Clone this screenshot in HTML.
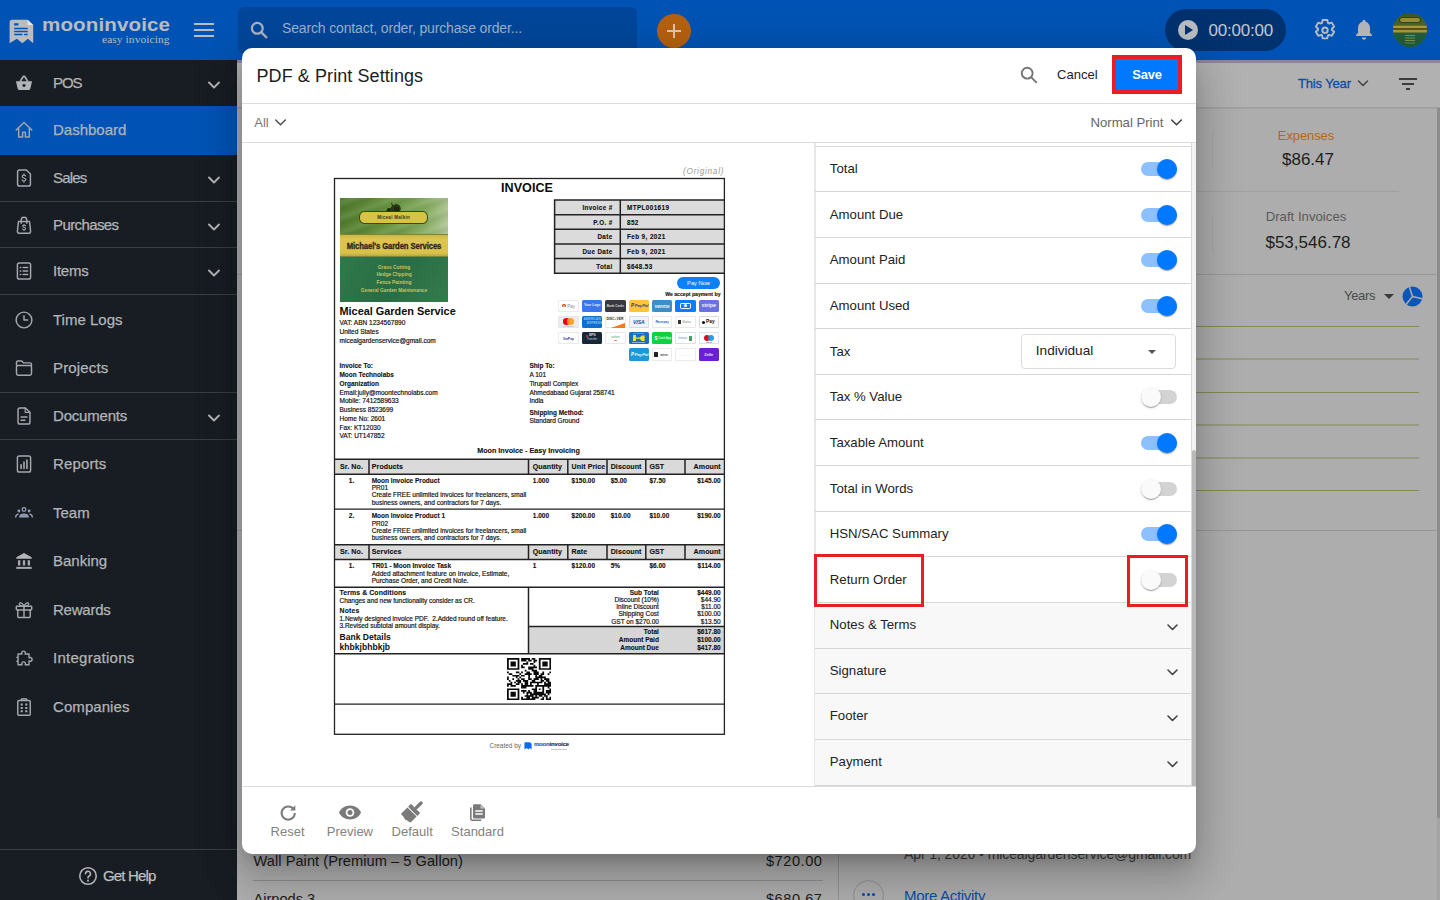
<!DOCTYPE html>
<html>
<head>
<meta charset="utf-8">
<title>PDF &amp; Print Settings</title>
<style>
*{box-sizing:border-box;margin:0;padding:0}
html,body{width:1440px;height:900px;overflow:hidden}
body{font-family:"Liberation Sans",sans-serif;background:#adadad;position:relative;color:#222}
.abs{position:absolute}
/* ---------- header ---------- */
#hdr{position:absolute;left:0;top:0;width:1440px;height:60px;background:#0053b4}
#hdr .search{position:absolute;left:238px;top:7px;width:399px;height:46px;border-radius:6px;background:#00469a}
#hdr .search span{position:absolute;left:44px;top:13px;font-size:14px;color:#9fb0c8;white-space:nowrap;letter-spacing:-.15px}
#plus{position:absolute;left:657px;top:14px;width:34px;height:34px;border-radius:50%;background:#b5610f}
#plus:before{content:"";position:absolute;left:10px;top:16px;width:14px;height:2px;background:#d8c8b4}
#plus:after{content:"";position:absolute;left:16px;top:10px;width:2px;height:14px;background:#d8c8b4}
#timer{position:absolute;left:1165px;top:9px;width:121px;height:42px;border-radius:21px;background:#00326f}
#timer .play{position:absolute;left:13px;top:11px;width:20px;height:20px;border-radius:50%;background:#b9bcc0}
#timer .play:after{content:"";position:absolute;left:7px;top:5px;border-left:8px solid #00326f;border-top:5px solid transparent;border-bottom:5px solid transparent}
#timer span{position:absolute;left:43.500px;top:11.700px;font-size:17px;color:#c3c8cf;letter-spacing:-.2px}
#avatar{position:absolute;left:1393px;top:13px;width:34px;height:34px;border-radius:50%;overflow:hidden;background:#4c6a2c}
#hstrip{position:absolute;left:237px;top:60px;width:1203px;height:3px;background:#8d84a0}
/* ---------- sidebar ---------- */
#side{position:absolute;left:0;top:60px;width:237px;height:840px;background:#181d23}
#side .it{position:absolute;left:0;width:237px;color:#b2b4b7;font-size:15px}
#side .it .lb{position:absolute;left:53px;white-space:nowrap;-webkit-text-stroke:.25px #b2b4b7}
#side .it svg.ic{position:absolute;left:13px}
#side .it svg.ch{position:absolute;left:207px}
#side .ln{position:absolute;left:0;width:237px;height:1px;background:#3a3f45}
#side .act{background:#0053b4}
/* ---------- page bg ---------- */
#sub{position:absolute;left:237px;top:63px;width:1203px;height:45px;background:#b1b1b1}
</style>
</head>
<body>
<!--PAGE-->
<div id="sub"></div>
<div id="hstrip"></div>
<div class="abs" style="left:237px;top:107px;width:1203px;height:2px;background:linear-gradient(#9c9c9c,#a6a6a6)"></div>
<div class="abs" style="left:1437px;top:108px;width:3px;height:792px;background:#a4a4a4"></div><div class="abs" style="left:1437px;top:108px;width:3px;height:710px;background:#8c8c8c"></div>
<div class="abs" style="left:1298px;top:76px;font-size:13px;color:#0a4da6;white-space:nowrap;letter-spacing:-.15px;-webkit-text-stroke:.3px #0a4da6">This Year</div>
<svg class="abs" style="left:1357px;top:79px" width="12" height="9" viewBox="0 0 12 9" fill="none" stroke="#444" stroke-width="1.500" stroke-linecap="round" stroke-linejoin="round"><path d="M1.500 2l4.500 4.500L10.500 2"/></svg>
<div class="abs" style="left:1399px;top:78px;width:18px;height:2px;background:#3c3c3c"></div>
<div class="abs" style="left:1402px;top:83px;width:12px;height:2px;background:#3c3c3c"></div>
<div class="abs" style="left:1406px;top:88px;width:4px;height:2px;background:#3c3c3c"></div>
<!-- stats -->
<div class="abs" style="left:1212px;top:132px;width:1px;height:35px;background:#a2a2a2"></div>
<div class="abs" style="left:1212px;top:215px;width:1px;height:36px;background:#a2a2a2"></div>
<div class="abs" style="left:1196px;top:191px;width:203px;height:1px;background:#a0a0a0"></div>
<div class="abs" style="left:1206px;top:128px;width:200px;text-align:center;font-size:13px;color:#b5671c;letter-spacing:-.1px">Expenses</div>
<div class="abs" style="left:1208px;top:149.800px;width:200px;text-align:center;font-size:17px;color:#1e1e1e">$86.47</div>
<div class="abs" style="left:1206px;top:209px;width:200px;text-align:center;font-size:13.200px;color:#5a5a5a">Draft Invoices</div>
<div class="abs" style="left:1208px;top:232.500px;width:200px;text-align:center;font-size:17px;color:#1e1e1e">$53,546.78</div>
<div class="abs" style="left:237px;top:274px;width:1200px;height:1px;background:#989898"></div>
<div class="abs" style="left:1344px;top:288px;font-size:13px;color:#4a4a4a;letter-spacing:-.3px">Years</div>
<div class="abs" style="left:1384px;top:294px;border-top:5px solid #3a3a3a;border-left:5px solid transparent;border-right:5px solid transparent"></div>
<svg class="abs" style="left:1402px;top:286px" width="21" height="21" viewBox="0 0 21 21"><circle cx="10.500" cy="10.500" r="10" fill="#0a55b8"/><path d="M10.500 10.500L7.400 1M10.500 10.500l9.600 2.300M10.500 10.500L4.200 18.200" stroke="#adadad" stroke-width="1.500" fill="none"/></svg>
<div class="abs" style="left:1196px;top:326px;width:223px;height:1px;background:#7f8c52;box-shadow:0 32.500px 0 #7f8c52,0 66px 0 #7f8c52,0 98.500px 0 #7f8c52,0 131.500px 0 #7f8c52,0 164px 0 #7f8c52"></div>
<div class="abs" style="left:237px;top:530px;width:1200px;height:1px;background:#969696"></div>
<!-- bottom lists -->
<div class="abs" style="left:253.500px;top:852.500px;font-size:14.600px;color:#1c1c1c;white-space:nowrap;letter-spacing:.05px">Wall Paint (Premium – 5 Gallon)</div>
<div class="abs" style="left:700px;top:852.500px;width:122.500px;text-align:right;font-size:14.600px;letter-spacing:.55px;color:#1c1c1c">$720.00</div>
<div class="abs" style="left:253px;top:880px;width:570px;height:1px;background:#8d8d8d"></div>
<div class="abs" style="left:253.500px;top:891px;font-size:14.600px;color:#1c1c1c;white-space:nowrap">Airpods 3</div>
<div class="abs" style="left:700px;top:891px;width:122.500px;text-align:right;font-size:14.600px;letter-spacing:.55px;color:#1c1c1c">$680.67</div>
<div class="abs" style="left:837.500px;top:780px;width:1px;height:120px;background:#949494"></div>
<div class="abs" style="left:904px;top:846px;font-size:14px;color:#3c3c3c;white-space:nowrap;letter-spacing:-.1px">Apr 1, 2026 • micealgardenservice@gmail.com</div>
<div class="abs" style="left:853px;top:880px;width:31px;height:31px;border-radius:50%;border:1px solid #8f8f8f"></div>
<div class="abs" style="left:862px;top:893px;width:3px;height:3px;border-radius:50%;background:#0a4da6;box-shadow:5px 0 0 #0a4da6,10px 0 0 #0a4da6"></div>
<div class="abs" style="left:904px;top:887px;font-size:15px;color:#0a4da6;white-space:nowrap;letter-spacing:-.3px">More Activity</div>

<div id="hdr">
  <svg class="abs" style="left:9px;top:19px" width="26" height="25" viewBox="0 0 26 25">
<path d="M3.2 0.700H18.600L24.200 6v18.300l-5.300-4.600-5.600 4.600-5.400-4.600L0.600 24.300V3.300A2.600 2.600 0 0 1 3.200 0.700z" fill="#b9bcc0"/>
<path d="M18.600 0.700V6h5.600z" fill="#e4e6e8"/>
<path d="M5.200 4.200h4.200v2.400H5.200zM5.200 8.800h13.500v1.500H5.200zM5.200 11.800h13.500v1.500H5.200zM5.200 14.800h8.300v1.500H5.200zM15.200 14.800h3.500v1.500h-3.500z" fill="#0053b4"/>
</svg>
<div class="abs" style="left:41.500px;top:14px;font-size:18.500px;font-weight:700;color:#b9bcc0;letter-spacing:.1px;white-space:nowrap;transform-origin:0 50%;transform:scaleX(1.112)">mooninvoice</div>
<div class="abs" style="left:102px;top:33px;font-family:'Liberation Serif',serif;font-size:11.400px;color:#b9bcc0;letter-spacing:.1px;white-space:nowrap">easy invoicing</div>
<div class="abs" style="left:194px;top:23px;width:20px;height:2px;background:#b9bcc0;box-shadow:0 6px 0 #b9bcc0,0 12px 0 #b9bcc0"></div>
  <div class="search"><svg class="abs" style="left:11px;top:13px" width="20" height="20" viewBox="0 0 20 20" fill="none" stroke="#aab3c0" stroke-width="2.200" stroke-linecap="round"><circle cx="8.300" cy="8.300" r="5.400"/><path d="M12.400 12.400l5 5"/></svg><span>Search contact, order, purchase order...</span></div>
  <div id="plus"></div>
  <div id="timer"><div class="play"></div><span>00:00:00</span></div>
  <svg class="abs" style="left:1313px;top:17.500px" width="24" height="24" viewBox="0 0 24 24" fill="none" stroke="#b9bcc0" stroke-width="1.900" stroke-linejoin="round"><path d="M9.700 2h4.600l.7 3 .9.500 2.900-.9 2.300 4-2.200 2.100v1l2.200 2.100-2.300 4-2.900-.9-.9.500-.7 3H9.700l-.7-3-.9-.5-2.900.9-2.300-4 2.200-2.100v-1L2.900 8.600l2.300-4 2.900.9.900-.5z"/><circle cx="12" cy="12.200" r="2.700"/></svg>
<svg class="abs" style="left:1353px;top:18.200px" width="22" height="24" viewBox="0 0 22 24"><path d="M11 1.800a1.500 1.500 0 0 1 1.500 1.500v.5c2.800.7 4.500 3.100 4.500 6.200v4.800l2 2.200v1H3v-1l2-2.200V10c0-3.100 1.700-5.500 4.500-6.200v-.5A1.500 1.500 0 0 1 11 1.800zM8.800 19.600h4.400a2.200 2.200 0 0 1-4.400 0z" fill="#b3b4b6"/></svg>
  <div id="avatar"><div class="abs" style="left:0;top:0;width:34px;height:34px;background:linear-gradient(#38561f 0,#45652b 34%,#5a5a24 36%,#a89838 38.500%,#ac9c3a 44%,#5a4e1c 45.500%,#3a3012 47%,#5a4e1c 48.500%,#a89838 50%,#a4943a 56%,#3a5a30 58.500%,#1f5c3a 62%,#1d5636 100%)"></div><div class="abs" style="left:7px;top:5px;width:20px;height:3.500px;border-radius:2px;background:#9a8c34;box-shadow:0 0 0 .8px #2a3a18"></div><div class="abs" style="left:12px;top:22px;width:10px;height:1px;background:#7a8c4c;box-shadow:0 2.500px 0 #7a8c4c,0 5px 0 #7a8c4c,0 7.500px 0 #6a7c44"></div></div>
</div>
<div id="side">
<div class="it act" style="top:46px;height:48.5px"></div>
<div class="it" style="top:11px;height:24px"><svg class="ic" width="22" height="22" viewBox="0 0 24 24" fill="none" stroke="#a4a7ab" stroke-width="1.6" stroke-linecap="round" stroke-linejoin="round" style="top:1px"><path d="M3.2 10h17.6l-1.9 8.3a1.6 1.6 0 0 1-1.6 1.2H6.7a1.6 1.6 0 0 1-1.6-1.2z" fill="#b2b4b7" stroke="none"/><path d="M8 10l3.2-5.2M16 10l-3.2-5.2" stroke-width="2"/><circle cx="12" cy="14.8" r="1.6" fill="#181d23" stroke="none"/></svg><span class="lb" style="top:3px;letter-spacing:-1.06px">POS</span><svg class="ch" style="top:9px" width="14" height="10" viewBox="0 0 14 10" fill="none" stroke="#b2b4b7" stroke-width="1.900" stroke-linecap="round" stroke-linejoin="round"><path d="M2 2.500l5 5 5-5"/></svg></div>
<div class="it" style="top:58px;height:24px"><svg class="ic" width="22" height="22" viewBox="0 0 24 24" fill="none" stroke="#a4a7ab" stroke-width="1.6" stroke-linecap="round" stroke-linejoin="round" style="top:1px"><path d="M3.5 12L12 3.8l8.500 8.2M6.200 10v9.700h4.300v-5.400h3v5.400h4.300V10"/></svg><span class="lb" style="top:3px;letter-spacing:0px">Dashboard</span></div>
<div class="it" style="top:106px;height:24px"><svg class="ic" width="22" height="22" viewBox="0 0 24 24" fill="none" stroke="#a4a7ab" stroke-width="1.6" stroke-linecap="round" stroke-linejoin="round" style="top:1px"><path d="M5 5.200a2 2 0 0 1 2-2h7.500L19 7.700v11.100a2 2 0 0 1-2 2H7a2 2 0 0 1-2-2z"/><path d="M13.800 9.800c-.4-.7-1.100-1-1.900-1-1.100 0-1.900.6-1.900 1.600 0 2.200 3.900 1 3.900 3.300 0 1-.9 1.600-2 1.600-.9 0-1.700-.4-2.100-1.200M12 7.600v1.200M12 15.300v1.200" stroke-width="1.300"/></svg><span class="lb" style="top:3px;letter-spacing:-0.8px">Sales</span><svg class="ch" style="top:9px" width="14" height="10" viewBox="0 0 14 10" fill="none" stroke="#b2b4b7" stroke-width="1.900" stroke-linecap="round" stroke-linejoin="round"><path d="M2 2.500l5 5 5-5"/></svg></div>
<div class="it" style="top:152.5px;height:24px"><svg class="ic" width="22" height="22" viewBox="0 0 24 24" fill="none" stroke="#a4a7ab" stroke-width="1.6" stroke-linecap="round" stroke-linejoin="round" style="top:1px"><path d="M6 8.200h12l1.200 10.600a2 2 0 0 1-2 2.200H6.800a2 2 0 0 1-2-2.200z"/><path d="M9 10V6.500a3 3 0 0 1 6 0V10"/><path d="M13.600 12.900c-.3-.5-.9-.8-1.500-.8-.9 0-1.500.5-1.500 1.200 0 1.700 3.100.8 3.100 2.600 0 .8-.7 1.300-1.600 1.300-.7 0-1.300-.3-1.700-.9M12 11.200v.9M12 17.200v.9" stroke-width="1.200"/></svg><span class="lb" style="top:3px;letter-spacing:-0.6px">Purchases</span><svg class="ch" style="top:9px" width="14" height="10" viewBox="0 0 14 10" fill="none" stroke="#b2b4b7" stroke-width="1.900" stroke-linecap="round" stroke-linejoin="round"><path d="M2 2.500l5 5 5-5"/></svg></div>
<div class="it" style="top:199px;height:24px"><svg class="ic" width="22" height="22" viewBox="0 0 24 24" fill="none" stroke="#a4a7ab" stroke-width="1.6" stroke-linecap="round" stroke-linejoin="round" style="top:1px"><rect x="4.800" y="3.200" width="14.400" height="17.600" rx="2"/><path d="M11 8.200h5M11 12h5M11 15.800h5" stroke-width="1.500"/><path d="M8 8.200h.4M8 12h.4M8 15.800h.4" stroke-width="1.800"/></svg><span class="lb" style="top:3px;letter-spacing:-0.24px">Items</span><svg class="ch" style="top:9px" width="14" height="10" viewBox="0 0 14 10" fill="none" stroke="#b2b4b7" stroke-width="1.900" stroke-linecap="round" stroke-linejoin="round"><path d="M2 2.500l5 5 5-5"/></svg></div>
<div class="it" style="top:248px;height:24px"><svg class="ic" width="22" height="22" viewBox="0 0 24 24" fill="none" stroke="#a4a7ab" stroke-width="1.6" stroke-linecap="round" stroke-linejoin="round" style="top:1px"><circle cx="12" cy="12" r="8.600"/><path d="M12 7.300V12h4"/></svg><span class="lb" style="top:3px;letter-spacing:0px">Time Logs</span></div>
<div class="it" style="top:296px;height:24px"><svg class="ic" width="22" height="22" viewBox="0 0 24 24" fill="none" stroke="#a4a7ab" stroke-width="1.6" stroke-linecap="round" stroke-linejoin="round" style="top:1px"><path d="M3.800 9.300V6a1.600 1.600 0 0 1 1.600-1.600h4.200l1.800 2h7.200A1.600 1.600 0 0 1 20.200 8v1.300"/><rect x="3.800" y="9.300" width="16.400" height="10.500" rx="1.800"/></svg><span class="lb" style="top:3px;letter-spacing:0.16px">Projects</span></div>
<div class="it" style="top:344px;height:24px"><svg class="ic" width="22" height="22" viewBox="0 0 24 24" fill="none" stroke="#a4a7ab" stroke-width="1.6" stroke-linecap="round" stroke-linejoin="round" style="top:1px"><path d="M5.500 5.200a2 2 0 0 1 2-2h6L18.500 8v10.800a2 2 0 0 1-2 2h-9a2 2 0 0 1-2-2z"/><path d="M13.300 3.400V8h4.900" stroke-width="1.300"/><path d="M8.800 13h6.400M8.800 16.600h4.200" stroke-width="1.700"/></svg><span class="lb" style="top:3px;letter-spacing:-0.2px">Documents</span><svg class="ch" style="top:9px" width="14" height="10" viewBox="0 0 14 10" fill="none" stroke="#b2b4b7" stroke-width="1.900" stroke-linecap="round" stroke-linejoin="round"><path d="M2 2.500l5 5 5-5"/></svg></div>
<div class="it" style="top:392px;height:24px"><svg class="ic" width="22" height="22" viewBox="0 0 24 24" fill="none" stroke="#a4a7ab" stroke-width="1.6" stroke-linecap="round" stroke-linejoin="round" style="top:1px"><rect x="4.800" y="3.200" width="14.400" height="17.600" rx="2"/><path d="M8.800 16.800v-4M12 16.800V9.800M15.200 16.800V7.600" stroke-width="1.800"/></svg><span class="lb" style="top:3px;letter-spacing:0.14px">Reports</span></div>
<div class="it" style="top:440.5px;height:24px"><svg class="ic" width="22" height="22" viewBox="0 0 24 24" fill="none" stroke="#a4a7ab" stroke-width="1.6" stroke-linecap="round" stroke-linejoin="round" style="top:1px"><g stroke="#93a2b8"><circle cx="12" cy="8.200" r="2" stroke-width="1.400"/><path d="M7.200 16.300c.3-2 2.300-3.300 4.800-3.300s4.500 1.300 4.800 3.300z" fill="#8696ad" stroke-width="1.100"/><circle cx="6.400" cy="9.800" r=".9" stroke-width="1.300"/><circle cx="17.600" cy="9.800" r=".9" stroke-width="1.300"/><path d="M3 16.300c.1-1.600 1-2.700 2.600-3M21 16.300c-.1-1.600-1-2.700-2.600-3" stroke-width="1.500"/></g></svg><span class="lb" style="top:3px;letter-spacing:0px">Team</span></div>
<div class="it" style="top:489px;height:24px"><svg class="ic" width="22" height="22" viewBox="0 0 24 24" fill="none" stroke="#a4a7ab" stroke-width="1.6" stroke-linecap="round" stroke-linejoin="round" style="top:1px"><path d="M12 3.200L3.600 7.800v1.700h16.800V7.800z" fill="#b2b4b7" stroke="none"/><path d="M6.700 11.200v5.600M12 11.200v5.600M17.300 11.200v5.600" stroke-width="2.600" stroke-linecap="butt"/><path d="M3.600 19.500h16.800" stroke-width="2.200" stroke-linecap="butt"/></svg><span class="lb" style="top:3px;letter-spacing:0px">Banking</span></div>
<div class="it" style="top:537.5px;height:24px"><svg class="ic" width="22" height="22" viewBox="0 0 24 24" fill="none" stroke="#a4a7ab" stroke-width="1.6" stroke-linecap="round" stroke-linejoin="round" style="top:1px"><rect x="3.600" y="8" width="16.800" height="4" rx=".8"/><path d="M5.200 12v7.200a1 1 0 0 0 1 1h11.600a1 1 0 0 0 1-1V12M12 8v12.200"/><path d="M12 8c-1.200-3-3-4.300-4.400-3.700-1.500.7-1 3.700 4.400 3.700zM12 8c1.200-3 3-4.300 4.400-3.700 1.500.7 1 3.700-4.400 3.700z" stroke-width="1.400"/></svg><span class="lb" style="top:3px;letter-spacing:-0.24px">Rewards</span></div>
<div class="it" style="top:586px;height:24px"><svg class="ic" width="22" height="22" viewBox="0 0 24 24" fill="none" stroke="#a4a7ab" stroke-width="1.6" stroke-linecap="round" stroke-linejoin="round" style="top:1px"><path d="M9.500 6.500a2 2 0 1 1 4 0c0 .5-.1.800-.3 1.200h4.300v4.200c.4-.2.800-.4 1.300-.4a2 2 0 1 1 0 4c-.5 0-.9-.1-1.300-.4v4.300h-4.200c.2-.4.300-.8.300-1.200a2 2 0 1 0-4 0c0 .4.100.8.300 1.200H5.500v-4.100c-.4.200-.8.300-1.200.300a0 0 0 0 1 0 0c.9-.6 1.400-1.300 1.400-2.200s-.5-1.700-1.400-2.100c.4 0 .8.100 1.200.3V7.700h4.300c-.2-.4-.3-.8-.3-1.200z" stroke-width="1.500"/></svg><span class="lb" style="top:3px;letter-spacing:0.26px">Integrations</span></div>
<div class="it" style="top:634.5px;height:24px"><svg class="ic" width="22" height="22" viewBox="0 0 24 24" fill="none" stroke="#a4a7ab" stroke-width="1.6" stroke-linecap="round" stroke-linejoin="round" style="top:1px"><path d="M9.200 5V3.300h5.600V5"/><rect x="5.200" y="5" width="13.600" height="16" rx="1.200"/><path d="M9.400 9.300h.2M14.400 9.300h.2M9.400 13h.2M14.400 13h.2M9.400 16.700h.2M14.400 16.700h.2" stroke-width="2.200" stroke-linecap="square"/></svg><span class="lb" style="top:3px;letter-spacing:0.07px">Companies</span></div>
<div class="ln" style="top:140.5px"></div>
<div class="ln" style="top:187.0px"></div>
<div class="ln" style="top:234.0px"></div>
<div class="ln" style="top:332.0px"></div>
<div class="ln" style="top:378.5px"></div>
<div class="ln" style="top:788.5px"></div>
<div class="it" style="top:804px;height:24px"><svg class="ic" style="left:77px;top:1px" width="22" height="22" viewBox="0 0 24 24" fill="none" stroke="#b2b4b7" stroke-width="1.700" stroke-linecap="round"><circle cx="12" cy="12" r="9"/><path d="M9.300 9.600a2.700 2.700 0 1 1 4 2.400c-.9.500-1.300 1-1.300 2.100"/><path d="M12 16.900v.2" stroke-width="2.100"/></svg><span class="lb" style="left:103px;top:3px;letter-spacing:-.85px;color:#c0c2c5">Get Help</span></div>

</div>
<style>
#modal{position:absolute;left:242px;top:48px;width:954px;height:806px;background:#fff;border-radius:10px;box-shadow:0 11px 15px -7px rgba(0,0,0,.2),0 24px 38px 3px rgba(0,0,0,.14),0 9px 46px 8px rgba(0,0,0,.12);overflow:hidden}
#modal .hl{position:absolute;left:0;width:954px;height:1px;background:#dcdcdc}
#modal .t13{font-size:13.200px;white-space:nowrap}
.fb{position:absolute;top:776.300px;font-size:13px;color:#828282;white-space:nowrap;transform:translateX(-50%)}
</style>
<div id="modal">
  <div class="abs" style="left:14.500px;top:17.700px;font-size:18px;color:#1c1c1c;white-space:nowrap;letter-spacing:.08px">PDF &amp; Print Settings</div>
  <svg class="abs" style="left:777px;top:17px" width="20" height="20" viewBox="0 0 20 20" fill="none" stroke="#757575" stroke-width="1.900" stroke-linecap="round"><circle cx="8.200" cy="8.200" r="5.400"/><path d="M12.300 12.300l5 5"/></svg>
  <div class="abs" style="left:815px;top:19px;font-size:13px;color:#222;white-space:nowrap;letter-spacing:.05px">Cancel</div>
  <div class="abs" style="left:870px;top:7px;width:70px;height:39px;border:4px solid #ea1c24;background:#0078ff"></div>
  <div class="abs" style="left:870px;top:19px;width:70px;text-align:center;font-size:13px;font-weight:700;color:#fff;letter-spacing:-.2px">Save</div>
  <div class="hl" style="top:55px"></div>
  <div class="abs t13" style="left:12.300px;top:66.500px;color:#777;font-size:13px">All</div>
  <svg class="abs" style="left:32px;top:70px" width="13" height="9" viewBox="0 0 13 9" fill="none" stroke="#555" stroke-width="1.600" stroke-linecap="round" stroke-linejoin="round"><path d="M1.700 2l4.800 4.800L11.300 2"/></svg>
  <div class="abs t13" style="left:848.500px;top:66.500px;color:#666;letter-spacing:-.03px">Normal Print</div>
  <svg class="abs" style="left:927.500px;top:70px" width="13" height="9" viewBox="0 0 13 9" fill="none" stroke="#444" stroke-width="1.600" stroke-linecap="round" stroke-linejoin="round"><path d="M1.700 2l4.800 4.800L11.300 2"/></svg>
  <div class="hl" style="top:94px"></div>
  <!-- preview area -->
  <div class="abs" id="inv" style="left:0;top:95px;width:572px;height:643px;overflow:hidden">
<div class="abs" style="top:24.08px;font-size:8.2px;line-height:9.84px;color:#9a9a9a;white-space:nowrap;font-style:italic;right:89.80px;letter-spacing:.75px;">(Original)</div>
<div class="abs" style="top:37.84px;font-size:12.6px;line-height:15.12px;color:#0c0c0c;white-space:nowrap;font-weight:700;left:285.00px;transform:translateX(-50%);">INVOICE</div>
<div class="abs" style="left:97.6px;top:55.0px;width:108.8px;height:104.0px;overflow:hidden;background:#2f7448">
<div class="abs" style="left:0;top:0;width:108.8px;height:37px;background:linear-gradient(100deg,#4f7a2c 0%,#5f8a38 30%,#6e9a48 55%,#86ac62 78%,#b4c89a 100%)"></div>
<div class="abs" style="left:0;top:0;width:108.8px;height:37px;background:repeating-linear-gradient(160deg,rgba(255,255,255,0) 0,rgba(255,255,255,.09) 5px,rgba(0,0,0,.05) 10px,rgba(255,255,255,0) 14px)"></div>
<div class="abs" style="left:0;top:36.300px;width:108.8px;height:23px;background:linear-gradient(#596a24 0,#cdb848 1.500px,#dcc650 5px,#d9c24c 19px,#b8a840 22px,#3c6a3c 23px)"></div>
<div class="abs" style="left:0;top:59px;width:108.8px;height:46px;background:linear-gradient(120deg,#2e7a4a 0%,#2a6c44 50%,#347c4c 100%)"></div>
<div class="abs" style="left:19.700px;top:13.300px;width:68.600px;height:13.200px;background:#d8c444;border:1.100px solid #2c4a1c;border-radius:5px/6px"></div>
<div class="abs" style="left:37px;top:17.800px;width:34px;height:3.600px;font-size:4.500px;line-height:3.600px;font-weight:700;color:#3a3418;letter-spacing:.3px;white-space:nowrap;text-align:center">Miceal Malkin</div>
<svg class="abs" style="left:45px;top:3.500px" width="17" height="10" viewBox="0 0 17 10"><path d="M1 9.500c.2-2 1.500-3 3-3l1.500-.3L7 3.500 5.800 1l.6-.4 1.900 2.600 2.600-1.200c2 0 4.600 1.400 5 4.500l-.8 3z" fill="#2a3a18"/><circle cx="4" cy="7.800" r="1.800" fill="#1e2a12"/><circle cx="11.500" cy="7" r="2.600" fill="#1e2a12"/></svg>
<div class="abs" style="left:54.400px;top:43px;font-size:9px;line-height:11px;font-weight:700;color:#2a2418;white-space:nowrap;transform:translateX(-50%) scaleX(.85);letter-spacing:-.1px;-webkit-text-stroke:.3px #2a2418">Michael's Garden Services</div>
<div class="abs" style="left:54.400px;top:65.5px;font-size:6px;line-height:7px;font-weight:700;color:#c8c25e;white-space:nowrap;transform:translateX(-50%) scaleX(0.82)">Grass Cutting</div>
<div class="abs" style="left:54.400px;top:73.2px;font-size:6px;line-height:7px;font-weight:700;color:#c8c25e;white-space:nowrap;transform:translateX(-50%) scaleX(0.8)">Hedge Clipping</div>
<div class="abs" style="left:54.400px;top:80.9px;font-size:6px;line-height:7px;font-weight:700;color:#c8c25e;white-space:nowrap;transform:translateX(-50%) scaleX(0.82)">Fence Painting</div>
<div class="abs" style="left:54.400px;top:88.9px;font-size:6px;line-height:7px;font-weight:700;color:#c8c25e;white-space:nowrap;transform:translateX(-50%) scaleX(0.8)">General Garden Maintenance</div>
</div>
<div class="abs" style="left:312.60px;top:57.00px;width:169.80px;height:73.20px;background:#dbdbdb;"></div>
<div class="abs" style="top:60.97px;font-size:6.3px;line-height:7.56px;color:#111;white-space:nowrap;font-weight:700;-webkit-text-stroke:.12px #111;right:201.50px;letter-spacing:.35px;">Invoice #</div>
<div class="abs" style="top:60.97px;font-size:6.3px;line-height:7.56px;color:#111;white-space:nowrap;font-weight:700;-webkit-text-stroke:.12px #111;left:385.00px;letter-spacing:.42px;">MTPL001619</div>
<div class="abs" style="top:75.62px;font-size:6.3px;line-height:7.56px;color:#111;white-space:nowrap;font-weight:700;-webkit-text-stroke:.12px #111;right:201.50px;letter-spacing:.35px;">P.O. #</div>
<div class="abs" style="top:75.62px;font-size:6.3px;line-height:7.56px;color:#111;white-space:nowrap;font-weight:700;-webkit-text-stroke:.12px #111;left:385.00px;letter-spacing:.42px;">852</div>
<div class="abs" style="top:90.27px;font-size:6.3px;line-height:7.56px;color:#111;white-space:nowrap;font-weight:700;-webkit-text-stroke:.12px #111;right:201.50px;letter-spacing:.35px;">Date</div>
<div class="abs" style="top:90.27px;font-size:6.3px;line-height:7.56px;color:#111;white-space:nowrap;font-weight:700;-webkit-text-stroke:.12px #111;left:385.00px;letter-spacing:.42px;">Feb 9, 2021</div>
<div class="abs" style="top:104.92px;font-size:6.3px;line-height:7.56px;color:#111;white-space:nowrap;font-weight:700;-webkit-text-stroke:.12px #111;right:201.50px;letter-spacing:.35px;">Due Date</div>
<div class="abs" style="top:104.92px;font-size:6.3px;line-height:7.56px;color:#111;white-space:nowrap;font-weight:700;-webkit-text-stroke:.12px #111;left:385.00px;letter-spacing:.42px;">Feb 9, 2021</div>
<div class="abs" style="top:119.52px;font-size:6.3px;line-height:7.56px;color:#111;white-space:nowrap;font-weight:700;-webkit-text-stroke:.12px #111;right:201.50px;letter-spacing:.35px;">Total</div>
<div class="abs" style="top:119.52px;font-size:6.3px;line-height:7.56px;color:#111;white-space:nowrap;font-weight:700;-webkit-text-stroke:.12px #111;left:385.00px;letter-spacing:.42px;">$648.53</div>
<div class="abs" style="left:435.00px;top:134.00px;width:43.00px;height:12.00px;background:#0c80f6;border-radius:6px;"></div>
<div class="abs" style="top:136.78px;font-size:5.7px;line-height:6.84px;color:#fff;white-space:nowrap;left:456.50px;transform:translateX(-50%);">Pay Now</div>
<div class="abs" style="top:147.91px;font-size:5.15px;line-height:6.18px;color:#111;white-space:nowrap;font-weight:700;-webkit-text-stroke:.12px #111;right:93.50px;">We accept payment by</div>
<div class="abs" style="left:316.25px;top:156.75px;width:20.5px;height:12.3px;background:#fff;border-radius:1.500px;overflow:hidden;box-shadow:inset 0 0 0 .7px #e4e4e4;"><div class="abs" style="left:4.10px;top:4.30px;width:3.4px;height:3.4px;border-radius:50%;background:#ea4335;opacity:1"></div><div class="abs" style="left:5.00px;top:5.10px;width:2.4px;height:2.4px;border-radius:50%;background:#4285f4;opacity:1"></div><div class="abs" style="left:4.70px;top:5.60px;width:1.8px;height:1.8px;border-radius:50%;background:#fbbc05;opacity:1"></div><div class="abs" style="top:3.96px;font-size:4.6px;line-height:5.29px;color:#8a8a8a;white-space:nowrap;letter-spacing:0px;left:9px;">Pay</div></div>
<div class="abs" style="left:339.90px;top:156.75px;width:20.5px;height:12.3px;background:#3a76ee;border-radius:1.500px;overflow:hidden;"><div class="abs" style="top:4.70px;font-size:3.3px;line-height:3.79px;color:#e8f0ff;white-space:nowrap;letter-spacing:0px;font-weight:700;left:50%;transform:translateX(-50%);">Your Logo</div></div>
<div class="abs" style="left:363.10px;top:156.75px;width:20.5px;height:12.3px;background:#38373f;border-radius:1.500px;overflow:hidden;"><div class="abs" style="top:4.82px;font-size:3.1px;line-height:3.56px;color:#d8d8dc;white-space:nowrap;letter-spacing:0px;font-weight:700;left:50%;transform:translateX(-50%);">Bank Cards</div></div>
<div class="abs" style="left:386.50px;top:156.75px;width:20.5px;height:12.3px;background:#ffc43a;border-radius:1.500px;overflow:hidden;"><div class="abs" style="top:4.19px;font-size:4.2px;line-height:4.83px;color:#1f3f8f;white-space:nowrap;letter-spacing:0px;font-weight:700;font-style:italic;left:6.2px;">PayPal</div><div class="abs" style="top:3.40px;font-size:4.6px;line-height:5.29px;color:#14316e;white-space:nowrap;letter-spacing:0px;font-weight:700;font-style:italic;left:2.6px;">P</div></div>
<div class="abs" style="left:409.90px;top:156.75px;width:20.5px;height:12.3px;background:#3d8fc9;border-radius:1.500px;overflow:hidden;"><div class="abs" style="top:3.96px;font-size:4.6px;line-height:5.29px;color:#f0f6fb;white-space:nowrap;letter-spacing:0px;font-weight:700;font-style:italic;left:50%;transform:translateX(-50%);">venmo</div></div>
<div class="abs" style="left:433.10px;top:156.75px;width:20.5px;height:12.3px;background:#0a7cff;border-radius:1.500px;overflow:hidden;"><div class="abs" style="left:5px;top:3px;width:10.500px;height:6.300px;border:1.100px solid #fff;border-radius:1.200px"></div><div class="abs" style="left:8.75px;top:4.65px;width:3.0px;height:3.0px;border-radius:50%;background:#fff;opacity:1"></div></div>
<div class="abs" style="left:456.50px;top:156.75px;width:20.5px;height:12.3px;background:#6b71e2;border-radius:1.500px;overflow:hidden;"><div class="abs" style="top:2.20px;font-size:5.6px;line-height:6.44px;color:#f0f0ff;white-space:nowrap;letter-spacing:-0.1px;font-weight:700;left:50%;transform:translateX(-50%);">stripe</div></div>
<div class="abs" style="left:316.25px;top:173.00px;width:20.5px;height:12.3px;background:#ececec;border-radius:1.500px;overflow:hidden;box-shadow:inset 0 0 0 .7px #e4e4e4;"><div class="abs" style="left:5.10px;top:2.30px;width:6.6px;height:6.6px;border-radius:50%;background:#eb001b;opacity:1"></div><div class="abs" style="left:8.90px;top:2.30px;width:6.6px;height:6.6px;border-radius:50%;background:#f79e1b;opacity:0.92"></div><div class="abs" style="left:5px;top:10px;width:10.500px;height:.7px;background:#cfcfcf"></div></div>
<div class="abs" style="left:339.90px;top:173.00px;width:20.5px;height:12.3px;background:#0e6fd0;border-radius:1.500px;overflow:hidden;"><div class="abs" style="top:2.00px;font-size:3.2px;line-height:3.68px;color:#8fc3f2;white-space:nowrap;letter-spacing:0px;font-weight:700;left:50%;transform:translateX(-50%);">AMERICAN</div><div class="abs" style="top:6.30px;font-size:3.2px;line-height:3.68px;color:#8fc3f2;white-space:nowrap;letter-spacing:0px;font-weight:700;left:5px;">EXPRESS</div></div>
<div class="abs" style="left:363.10px;top:173.00px;width:20.5px;height:12.3px;background:#fff;border-radius:1.500px;overflow:hidden;box-shadow:inset 0 0 0 .7px #e4e4e4;"><div class="abs" style="top:2.20px;font-size:3.4px;line-height:3.91px;color:#2a2a2a;white-space:nowrap;letter-spacing:0px;font-weight:700;left:1.3px;">DISC<span style="color:#f47216">●</span>VER</div><div class="abs" style="left:3px;top:6.500px;width:0;height:0;border-left:17.500px solid transparent;border-bottom:6px solid #f47a20"></div></div>
<div class="abs" style="left:386.50px;top:173.00px;width:20.5px;height:12.3px;background:#f1f3f9;border-radius:1.500px;overflow:hidden;box-shadow:inset 0 0 0 .7px #c8d4e6;"><div class="abs" style="top:3.73px;font-size:5px;line-height:5.75px;color:#1a4fa0;white-space:nowrap;letter-spacing:0px;font-weight:700;font-style:italic;left:50%;transform:translateX(-50%);">VISA</div></div>
<div class="abs" style="left:409.90px;top:173.00px;width:20.5px;height:12.3px;background:#fff;border-radius:1.500px;overflow:hidden;box-shadow:inset 0 0 0 .7px #e4e4e4;"><div class="abs" style="top:4.88px;font-size:3px;line-height:3.45px;color:#2b63c8;white-space:nowrap;letter-spacing:0px;font-weight:700;font-style:italic;left:50%;transform:translateX(-50%);">Razorpay</div></div>
<div class="abs" style="left:433.10px;top:173.00px;width:20.5px;height:12.3px;background:#fff;border-radius:1.500px;overflow:hidden;box-shadow:inset 0 0 0 .7px #e4e4e4;"><div class="abs" style="left:3px;top:4.300px;width:3.200px;height:3.600px;background:#333"></div><div class="abs" style="top:4.93px;font-size:2.9px;line-height:3.33px;color:#777;white-space:nowrap;letter-spacing:0px;left:7.3px;">Klarna</div></div>
<div class="abs" style="left:456.50px;top:173.00px;width:20.5px;height:12.3px;background:#fff;border-radius:1.500px;overflow:hidden;box-shadow:inset 0 0 0 .7px #cfcfcf;"><div class="abs" style="left:3.70px;top:4.70px;width:3.0px;height:3.0px;border-radius:50%;background:#111;opacity:1"></div><div class="abs" style="top:3.10px;font-size:4.8px;line-height:5.52px;color:#111;white-space:nowrap;letter-spacing:0px;font-weight:700;left:7.6px;">Pay</div></div>
<div class="abs" style="left:316.25px;top:189.00px;width:20.5px;height:12.3px;background:#fff;border-radius:1.500px;overflow:hidden;box-shadow:inset 0 0 0 .7px #e4e4e4;"><div class="abs" style="top:4.59px;font-size:3.5px;line-height:4.02px;color:#2e3a86;white-space:nowrap;letter-spacing:0px;font-weight:700;left:50%;transform:translateX(-50%);">GoPay</div></div>
<div class="abs" style="left:339.90px;top:189.00px;width:20.5px;height:12.3px;background:#17273a;border-radius:1.500px;overflow:hidden;"><div class="abs" style="left:4.40px;top:3.20px;width:2px;height:2px;border-radius:50%;background:#e33;opacity:1"></div><div class="abs" style="top:2.10px;font-size:3.1px;line-height:3.56px;color:#e8e8e8;white-space:nowrap;letter-spacing:0px;font-weight:700;left:7.4px;">EPS</div><div class="abs" style="top:6.20px;font-size:2.8px;line-height:3.22px;color:#d8d8d8;white-space:nowrap;letter-spacing:0px;left:50%;transform:translateX(-50%);">Transfer</div></div>
<div class="abs" style="left:363.10px;top:189.00px;width:20.5px;height:12.3px;background:#fff;border-radius:1.500px;overflow:hidden;box-shadow:inset 0 0 0 .7px #e4e4e4;"><div class="abs" style="top:3.00px;font-size:3.5px;line-height:4.02px;color:#4aa86a;white-space:nowrap;letter-spacing:0px;left:50%;transform:translateX(-50%);">sofort</div><div class="abs" style="left:8.500px;top:8px;width:3px;height:.8px;background:#e88"></div></div>
<div class="abs" style="left:386.50px;top:189.00px;width:20.5px;height:12.3px;background:#1b6ec0;border-radius:1.500px;overflow:hidden;"><div class="abs" style="left:4.300px;top:3.400px;width:3px;height:5.600px;background:#f8e020"></div><div class="abs" style="left:7.300px;top:3.400px;width:8.800px;height:5.600px;background:#f8e020;clip-path:polygon(0 38%,42% 38%,70% 0,100% 0,100% 100%,70% 100%,42% 62%,0 62%)"></div><div class="abs" style="top:0.20px;font-size:2.2px;line-height:2.53px;color:#9cc4ec;white-space:nowrap;letter-spacing:0px;font-weight:700;left:50%;transform:translateX(-50%);">DANKORT</div><div class="abs" style="left:3.500px;top:10.300px;width:13px;height:.8px;background:#7fb0e0"></div></div>
<div class="abs" style="left:409.90px;top:189.00px;width:20.5px;height:12.3px;background:#0fd142;border-radius:1.500px;overflow:hidden;"><div class="abs" style="top:3.00px;font-size:5.2px;line-height:5.98px;color:#fff;white-space:nowrap;letter-spacing:0px;font-weight:700;left:2.6px;">$</div><div class="abs" style="top:4.99px;font-size:2.8px;line-height:3.22px;color:#d8ffe2;white-space:nowrap;letter-spacing:0px;font-weight:700;left:6.4px;">Cash App</div></div>
<div class="abs" style="left:433.10px;top:189.00px;width:20.5px;height:12.3px;background:#fff;border-radius:1.500px;overflow:hidden;box-shadow:inset 0 0 0 .7px #c6daf0;"><div class="abs" style="top:4.88px;font-size:3px;line-height:3.45px;color:#5a8fd0;white-space:nowrap;letter-spacing:0px;left:3.2px;">Interac</div><div class="abs" style="left:14.200px;top:4px;width:2.500px;height:4.500px;background:#3aa860"></div></div>
<div class="abs" style="left:456.50px;top:189.00px;width:20.5px;height:12.3px;background:#fff;border-radius:1.500px;overflow:hidden;box-shadow:inset 0 0 0 .7px #c6daf0;"><div class="abs" style="left:5.60px;top:2.60px;width:6px;height:6px;border-radius:50%;background:#eb001b;opacity:1"></div><div class="abs" style="left:9.00px;top:2.60px;width:6px;height:6px;border-radius:50%;background:#1a8fe0;opacity:0.9"></div><div class="abs" style="left:7px;top:9.600px;width:6.500px;height:.8px;background:#bbb"></div></div>
<div class="abs" style="left:386.50px;top:205.40px;width:20.5px;height:12.3px;background:#1c9ad8;border-radius:1.500px;overflow:hidden;"><div class="abs" style="top:4.19px;font-size:4.2px;line-height:4.83px;color:#e8f6ff;white-space:nowrap;letter-spacing:0px;font-weight:700;font-style:italic;left:6.2px;">PayPal</div><div class="abs" style="top:3.50px;font-size:4.6px;line-height:5.29px;color:#fff;white-space:nowrap;letter-spacing:0px;font-weight:700;font-style:italic;left:2.6px;">P</div></div>
<div class="abs" style="left:409.90px;top:205.40px;width:20.5px;height:12.3px;background:#fff;border-radius:1.500px;overflow:hidden;box-shadow:inset 0 0 0 .7px #e4e4e4;"><div class="abs" style="left:2.500px;top:3.600px;width:4px;height:4.800px;background:#222;border-radius:.6px"></div><div class="abs" style="top:4.53px;font-size:3.6px;line-height:4.14px;color:#555;white-space:nowrap;letter-spacing:0px;font-weight:700;left:8.3px;">wise</div></div>
<div class="abs" style="left:433.10px;top:205.40px;width:20.5px;height:12.3px;background:#fff;border-radius:1.500px;overflow:hidden;box-shadow:inset 0 0 0 .7px #e4e4e4;"><div class="abs" style="top:5.11px;font-size:2.6px;line-height:2.99px;color:#aab;white-space:nowrap;letter-spacing:0px;left:50%;transform:translateX(-50%);">- - - - - - - ·</div></div>
<div class="abs" style="left:456.50px;top:205.40px;width:20.5px;height:12.3px;background:#6a1fd2;border-radius:1.500px;overflow:hidden;"><div class="abs" style="top:4.36px;font-size:3.9px;line-height:4.48px;color:#f0e8ff;white-space:nowrap;letter-spacing:0px;font-weight:700;left:50%;transform:translateX(-50%);">Zelle</div></div>
<div class="abs" style="top:162.26px;font-size:10.9px;line-height:13.08px;color:#0c0c0c;white-space:nowrap;font-weight:700;left:97.50px;">Miceal Garden Service</div>
<div class="abs" style="top:175.77px;font-size:6.54px;line-height:7.85px;color:#111;white-space:nowrap;-webkit-text-stroke:.18px #111;left:97.50px;">VAT: ABN 1234567890</div>
<div class="abs" style="top:185.07px;font-size:6.54px;line-height:7.85px;color:#111;white-space:nowrap;-webkit-text-stroke:.18px #111;left:97.50px;">United States</div>
<div class="abs" style="top:193.77px;font-size:6.54px;line-height:7.85px;color:#111;white-space:nowrap;-webkit-text-stroke:.18px #111;left:97.50px;">micealgardenservice@gmail.com</div>
<div class="abs" style="top:218.93px;font-size:6.45px;line-height:7.74px;color:#111;white-space:nowrap;font-weight:700;-webkit-text-stroke:.12px #111;left:97.50px;">Invoice To:</div>
<div class="abs" style="top:227.73px;font-size:6.45px;line-height:7.74px;color:#111;white-space:nowrap;font-weight:700;-webkit-text-stroke:.12px #111;left:97.50px;">Moon Technolabs</div>
<div class="abs" style="top:236.93px;font-size:6.45px;line-height:7.74px;color:#111;white-space:nowrap;font-weight:700;-webkit-text-stroke:.12px #111;left:97.50px;">Organization</div>
<div class="abs" style="top:245.68px;font-size:6.54px;line-height:7.85px;color:#111;white-space:nowrap;-webkit-text-stroke:.18px #111;left:97.50px;">Email:jully@moontechnolabs.com</div>
<div class="abs" style="top:254.38px;font-size:6.54px;line-height:7.85px;color:#111;white-space:nowrap;-webkit-text-stroke:.18px #111;left:97.50px;">Mobile: 7412589633</div>
<div class="abs" style="top:262.97px;font-size:6.54px;line-height:7.85px;color:#111;white-space:nowrap;-webkit-text-stroke:.18px #111;left:97.50px;">Business 8523699</div>
<div class="abs" style="top:272.18px;font-size:6.54px;line-height:7.85px;color:#111;white-space:nowrap;-webkit-text-stroke:.18px #111;left:97.50px;">Home No: 2601</div>
<div class="abs" style="top:280.68px;font-size:6.54px;line-height:7.85px;color:#111;white-space:nowrap;-webkit-text-stroke:.18px #111;left:97.50px;">Fax: KT12030</div>
<div class="abs" style="top:289.38px;font-size:6.54px;line-height:7.85px;color:#111;white-space:nowrap;-webkit-text-stroke:.18px #111;left:97.50px;">VAT: UT147852</div>
<div class="abs" style="top:218.93px;font-size:6.45px;line-height:7.74px;color:#111;white-space:nowrap;font-weight:700;-webkit-text-stroke:.12px #111;left:287.40px;">Ship To:</div>
<div class="abs" style="top:227.70px;font-size:6.5px;line-height:7.8px;color:#111;white-space:nowrap;-webkit-text-stroke:.18px #111;left:287.40px;">A 101</div>
<div class="abs" style="top:236.90px;font-size:6.5px;line-height:7.8px;color:#111;white-space:nowrap;-webkit-text-stroke:.18px #111;left:287.40px;">Tirupati Complex</div>
<div class="abs" style="top:245.70px;font-size:6.5px;line-height:7.8px;color:#111;white-space:nowrap;-webkit-text-stroke:.18px #111;left:287.40px;">Ahmedabaad Gujarat 258741</div>
<div class="abs" style="top:254.40px;font-size:6.5px;line-height:7.8px;color:#111;white-space:nowrap;-webkit-text-stroke:.18px #111;left:287.40px;">India</div>
<div class="abs" style="top:265.63px;font-size:6.45px;line-height:7.74px;color:#111;white-space:nowrap;font-weight:700;-webkit-text-stroke:.12px #111;left:287.40px;">Shipping Method:</div>
<div class="abs" style="top:274.20px;font-size:6.5px;line-height:7.8px;color:#111;white-space:nowrap;-webkit-text-stroke:.18px #111;left:287.40px;">Standard Ground</div>
<div class="abs" style="top:304.48px;font-size:7.2px;line-height:8.64px;color:#111;white-space:nowrap;font-weight:700;-webkit-text-stroke:.12px #111;left:286.50px;transform:translateX(-50%);">Moon Invoice - Easy Invoicing</div>
<div class="abs" style="left:92.50px;top:316.30px;width:389.90px;height:14.90px;background:#dadada;"></div>
<div class="abs" style="top:319.82px;font-size:7.05px;line-height:8.46px;color:#111;white-space:nowrap;font-weight:700;-webkit-text-stroke:.12px #111;left:109.50px;transform:translateX(-50%);letter-spacing:.1px;">Sr. No.</div>
<div class="abs" style="top:319.82px;font-size:7.05px;line-height:8.46px;color:#111;white-space:nowrap;font-weight:700;-webkit-text-stroke:.12px #111;left:129.80px;letter-spacing:.08px;">Products</div>
<div class="abs" style="top:319.82px;font-size:7.05px;line-height:8.46px;color:#111;white-space:nowrap;font-weight:700;-webkit-text-stroke:.12px #111;left:290.80px;letter-spacing:.08px;">Quantity</div>
<div class="abs" style="top:319.82px;font-size:7.05px;line-height:8.46px;color:#111;white-space:nowrap;font-weight:700;-webkit-text-stroke:.12px #111;left:329.60px;letter-spacing:.08px;">Unit Price</div>
<div class="abs" style="top:319.82px;font-size:7.05px;line-height:8.46px;color:#111;white-space:nowrap;font-weight:700;-webkit-text-stroke:.12px #111;left:368.70px;letter-spacing:.08px;">Discount</div>
<div class="abs" style="top:319.82px;font-size:7.05px;line-height:8.46px;color:#111;white-space:nowrap;font-weight:700;-webkit-text-stroke:.12px #111;left:407.40px;letter-spacing:.08px;">GST</div>
<div class="abs" style="top:319.82px;font-size:7.05px;line-height:8.46px;color:#111;white-space:nowrap;font-weight:700;-webkit-text-stroke:.12px #111;right:93.20px;letter-spacing:.1px;">Amount</div>
<div class="abs" style="top:334.30px;font-size:6.5px;line-height:7.8px;color:#111;white-space:nowrap;font-weight:700;-webkit-text-stroke:.12px #111;left:109.50px;transform:translateX(-50%);">1.</div>
<div class="abs" style="top:334.30px;font-size:6.5px;line-height:7.8px;color:#111;white-space:nowrap;font-weight:700;-webkit-text-stroke:.12px #111;left:129.70px;">Moon Invoice Product</div>
<div class="abs" style="top:340.88px;font-size:6.54px;line-height:7.85px;color:#111;white-space:nowrap;-webkit-text-stroke:.18px #111;left:129.70px;">PR01</div>
<div class="abs" style="top:348.18px;font-size:6.54px;line-height:7.85px;color:#111;white-space:nowrap;-webkit-text-stroke:.18px #111;left:129.70px;">Create FREE unlimited invoices for freelancers, small</div>
<div class="abs" style="top:355.68px;font-size:6.54px;line-height:7.85px;color:#111;white-space:nowrap;-webkit-text-stroke:.18px #111;left:129.70px;">business owners, and contractors for 7 days.</div>
<div class="abs" style="top:334.30px;font-size:6.5px;line-height:7.8px;color:#111;white-space:nowrap;font-weight:700;-webkit-text-stroke:.12px #111;left:290.80px;">1.000</div>
<div class="abs" style="top:334.30px;font-size:6.5px;line-height:7.8px;color:#111;white-space:nowrap;font-weight:700;-webkit-text-stroke:.12px #111;left:329.60px;">$150.00</div>
<div class="abs" style="top:334.30px;font-size:6.5px;line-height:7.8px;color:#111;white-space:nowrap;font-weight:700;-webkit-text-stroke:.12px #111;left:368.70px;">$5.00</div>
<div class="abs" style="top:334.30px;font-size:6.5px;line-height:7.8px;color:#111;white-space:nowrap;font-weight:700;-webkit-text-stroke:.12px #111;left:407.40px;">$7.50</div>
<div class="abs" style="top:334.30px;font-size:6.5px;line-height:7.8px;color:#111;white-space:nowrap;font-weight:700;-webkit-text-stroke:.12px #111;right:93.30px;">$145.00</div>
<div class="abs" style="top:369.30px;font-size:6.5px;line-height:7.8px;color:#111;white-space:nowrap;font-weight:700;-webkit-text-stroke:.12px #111;left:109.50px;transform:translateX(-50%);">2.</div>
<div class="abs" style="top:369.30px;font-size:6.5px;line-height:7.8px;color:#111;white-space:nowrap;font-weight:700;-webkit-text-stroke:.12px #111;left:129.70px;">Moon Invoice Product 1</div>
<div class="abs" style="top:376.57px;font-size:6.54px;line-height:7.85px;color:#111;white-space:nowrap;-webkit-text-stroke:.18px #111;left:129.70px;">PR02</div>
<div class="abs" style="top:383.87px;font-size:6.54px;line-height:7.85px;color:#111;white-space:nowrap;-webkit-text-stroke:.18px #111;left:129.70px;">Create FREE unlimited invoices for freelancers, small</div>
<div class="abs" style="top:391.28px;font-size:6.54px;line-height:7.85px;color:#111;white-space:nowrap;-webkit-text-stroke:.18px #111;left:129.70px;">business owners, and contractors for 7 days.</div>
<div class="abs" style="top:369.30px;font-size:6.5px;line-height:7.8px;color:#111;white-space:nowrap;font-weight:700;-webkit-text-stroke:.12px #111;left:290.80px;">1.000</div>
<div class="abs" style="top:369.30px;font-size:6.5px;line-height:7.8px;color:#111;white-space:nowrap;font-weight:700;-webkit-text-stroke:.12px #111;left:329.60px;">$200.00</div>
<div class="abs" style="top:369.30px;font-size:6.5px;line-height:7.8px;color:#111;white-space:nowrap;font-weight:700;-webkit-text-stroke:.12px #111;left:368.70px;">$10.00</div>
<div class="abs" style="top:369.30px;font-size:6.5px;line-height:7.8px;color:#111;white-space:nowrap;font-weight:700;-webkit-text-stroke:.12px #111;left:407.40px;">$10.00</div>
<div class="abs" style="top:369.30px;font-size:6.5px;line-height:7.8px;color:#111;white-space:nowrap;font-weight:700;-webkit-text-stroke:.12px #111;right:93.30px;">$190.00</div>
<div class="abs" style="left:92.50px;top:401.80px;width:389.90px;height:14.70px;background:#dadada;"></div>
<div class="abs" style="top:405.22px;font-size:7.05px;line-height:8.46px;color:#111;white-space:nowrap;font-weight:700;-webkit-text-stroke:.12px #111;left:109.50px;transform:translateX(-50%);letter-spacing:.1px;">Sr. No.</div>
<div class="abs" style="top:405.22px;font-size:7.05px;line-height:8.46px;color:#111;white-space:nowrap;font-weight:700;-webkit-text-stroke:.12px #111;left:129.80px;letter-spacing:.08px;">Services</div>
<div class="abs" style="top:405.22px;font-size:7.05px;line-height:8.46px;color:#111;white-space:nowrap;font-weight:700;-webkit-text-stroke:.12px #111;left:290.80px;letter-spacing:.08px;">Quantity</div>
<div class="abs" style="top:405.22px;font-size:7.05px;line-height:8.46px;color:#111;white-space:nowrap;font-weight:700;-webkit-text-stroke:.12px #111;left:329.60px;letter-spacing:.08px;">Rate</div>
<div class="abs" style="top:405.22px;font-size:7.05px;line-height:8.46px;color:#111;white-space:nowrap;font-weight:700;-webkit-text-stroke:.12px #111;left:368.70px;letter-spacing:.08px;">Discount</div>
<div class="abs" style="top:405.22px;font-size:7.05px;line-height:8.46px;color:#111;white-space:nowrap;font-weight:700;-webkit-text-stroke:.12px #111;left:407.40px;letter-spacing:.08px;">GST</div>
<div class="abs" style="top:405.22px;font-size:7.05px;line-height:8.46px;color:#111;white-space:nowrap;font-weight:700;-webkit-text-stroke:.12px #111;right:93.20px;letter-spacing:.1px;">Amount</div>
<div class="abs" style="top:418.90px;font-size:6.5px;line-height:7.8px;color:#111;white-space:nowrap;font-weight:700;-webkit-text-stroke:.12px #111;left:109.50px;transform:translateX(-50%);">1.</div>
<div class="abs" style="top:418.90px;font-size:6.5px;line-height:7.8px;color:#111;white-space:nowrap;font-weight:700;-webkit-text-stroke:.12px #111;left:129.70px;">TR01 - Moon Invoice Task</div>
<div class="abs" style="top:426.57px;font-size:6.54px;line-height:7.85px;color:#111;white-space:nowrap;-webkit-text-stroke:.18px #111;left:129.70px;">Added attachment feature on Invoice, Estimate,</div>
<div class="abs" style="top:434.07px;font-size:6.54px;line-height:7.85px;color:#111;white-space:nowrap;-webkit-text-stroke:.18px #111;left:129.70px;">Purchase Order, and Credit Note.</div>
<div class="abs" style="top:418.90px;font-size:6.5px;line-height:7.8px;color:#111;white-space:nowrap;font-weight:700;-webkit-text-stroke:.12px #111;left:290.80px;">1</div>
<div class="abs" style="top:418.90px;font-size:6.5px;line-height:7.8px;color:#111;white-space:nowrap;font-weight:700;-webkit-text-stroke:.12px #111;left:329.60px;">$120.00</div>
<div class="abs" style="top:418.90px;font-size:6.5px;line-height:7.8px;color:#111;white-space:nowrap;font-weight:700;-webkit-text-stroke:.12px #111;left:368.70px;">5%</div>
<div class="abs" style="top:418.90px;font-size:6.5px;line-height:7.8px;color:#111;white-space:nowrap;font-weight:700;-webkit-text-stroke:.12px #111;left:407.40px;">$6.00</div>
<div class="abs" style="top:418.90px;font-size:6.5px;line-height:7.8px;color:#111;white-space:nowrap;font-weight:700;-webkit-text-stroke:.12px #111;right:93.30px;">$114.00</div>
<div class="abs" style="top:446.36px;font-size:6.9px;line-height:8.28px;color:#111;white-space:nowrap;font-weight:700;-webkit-text-stroke:.12px #111;left:97.50px;letter-spacing:.1px;">Terms &amp; Conditions</div>
<div class="abs" style="top:454.33px;font-size:6.45px;line-height:7.74px;color:#111;white-space:nowrap;-webkit-text-stroke:.18px #111;left:97.50px;">Changes and new functionality consider as CR.</div>
<div class="abs" style="top:464.06px;font-size:6.9px;line-height:8.28px;color:#111;white-space:nowrap;font-weight:700;-webkit-text-stroke:.12px #111;left:97.50px;letter-spacing:.15px;">Notes</div>
<div class="abs" style="top:472.10px;font-size:6.5px;line-height:7.8px;color:#111;white-space:nowrap;-webkit-text-stroke:.18px #111;left:97.50px;">1.Newly designed invoice PDF.&nbsp; 2.Added round off feature.</div>
<div class="abs" style="top:478.90px;font-size:6.5px;line-height:7.8px;color:#111;white-space:nowrap;-webkit-text-stroke:.18px #111;left:97.50px;">3.Revised subtotal amount display.</div>
<div class="abs" style="top:488.67px;font-size:8.55px;line-height:10.26px;color:#111;white-space:nowrap;font-weight:700;left:97.50px;">Bank Details</div>
<div class="abs" style="top:498.64px;font-size:8.6px;line-height:10.32px;color:#111;white-space:nowrap;font-weight:700;left:97.50px;">khbkjbhbkjb</div>
<div class="abs" style="left:286.50px;top:483.60px;width:195.90px;height:27.10px;background:#d6d6d6;"></div>
<div class="abs" style="top:445.70px;font-size:6.5px;line-height:7.8px;color:#111;white-space:nowrap;font-weight:700;-webkit-text-stroke:.12px #111;right:155.10px;">Sub Total</div>
<div class="abs" style="top:445.70px;font-size:6.5px;line-height:7.8px;color:#111;white-space:nowrap;font-weight:700;-webkit-text-stroke:.12px #111;right:93.30px;">$449.00</div>
<div class="abs" style="top:453.00px;font-size:6.5px;line-height:7.8px;color:#111;white-space:nowrap;-webkit-text-stroke:.18px #111;right:155.10px;">Discount (10%)</div>
<div class="abs" style="top:453.00px;font-size:6.5px;line-height:7.8px;color:#111;white-space:nowrap;-webkit-text-stroke:.18px #111;right:93.30px;">$44.90</div>
<div class="abs" style="top:459.70px;font-size:6.5px;line-height:7.8px;color:#111;white-space:nowrap;-webkit-text-stroke:.18px #111;right:155.10px;">Inline Discount</div>
<div class="abs" style="top:459.70px;font-size:6.5px;line-height:7.8px;color:#111;white-space:nowrap;-webkit-text-stroke:.18px #111;right:93.30px;">$11.00</div>
<div class="abs" style="top:467.20px;font-size:6.5px;line-height:7.8px;color:#111;white-space:nowrap;-webkit-text-stroke:.18px #111;right:155.10px;">Shipping Cost</div>
<div class="abs" style="top:467.20px;font-size:6.5px;line-height:7.8px;color:#111;white-space:nowrap;-webkit-text-stroke:.18px #111;right:93.30px;">$100.00</div>
<div class="abs" style="top:475.10px;font-size:6.5px;line-height:7.8px;color:#111;white-space:nowrap;-webkit-text-stroke:.18px #111;right:155.10px;">GST on $270.00</div>
<div class="abs" style="top:475.10px;font-size:6.5px;line-height:7.8px;color:#111;white-space:nowrap;-webkit-text-stroke:.18px #111;right:93.30px;">$13.50</div>
<div class="abs" style="top:485.20px;font-size:6.5px;line-height:7.8px;color:#111;white-space:nowrap;font-weight:700;-webkit-text-stroke:.12px #111;right:155.10px;">Total</div>
<div class="abs" style="top:485.20px;font-size:6.5px;line-height:7.8px;color:#111;white-space:nowrap;font-weight:700;-webkit-text-stroke:.12px #111;right:93.30px;">$617.80</div>
<div class="abs" style="top:492.90px;font-size:6.5px;line-height:7.8px;color:#111;white-space:nowrap;font-weight:700;-webkit-text-stroke:.12px #111;right:155.10px;">Amount Paid</div>
<div class="abs" style="top:492.90px;font-size:6.5px;line-height:7.8px;color:#111;white-space:nowrap;font-weight:700;-webkit-text-stroke:.12px #111;right:93.30px;">$100.00</div>
<div class="abs" style="top:500.50px;font-size:6.5px;line-height:7.8px;color:#111;white-space:nowrap;font-weight:700;-webkit-text-stroke:.12px #111;right:155.10px;">Amount Due</div>
<div class="abs" style="top:500.50px;font-size:6.5px;line-height:7.8px;color:#111;white-space:nowrap;font-weight:700;-webkit-text-stroke:.12px #111;right:93.30px;">$417.80</div>
<svg class="abs" style="left:264.7px;top:515.0px" width="44.2" height="42.2" viewBox="0 0 25 25" preserveAspectRatio="none" shape-rendering="auto"><path d="M0 0h7v1h-7zM8 0h5v1h-5zM14 0h2v1h-2zM18 0h7v1h-7zM0 1h1v1h-1zM6 1h1v1h-1zM8 1h3v1h-3zM12 1h2v1h-2zM15 1h2v1h-2zM18 1h1v1h-1zM24 1h1v1h-1zM0 2h1v1h-1zM2 2h3v1h-3zM6 2h1v1h-1zM11 2h1v1h-1zM15 2h1v1h-1zM18 2h1v1h-1zM20 2h3v1h-3zM24 2h1v1h-1zM0 3h1v1h-1zM2 3h3v1h-3zM6 3h1v1h-1zM9 3h3v1h-3zM13 3h2v1h-2zM18 3h1v1h-1zM20 3h3v1h-3zM24 3h1v1h-1zM0 4h1v1h-1zM2 4h3v1h-3zM6 4h1v1h-1zM8 4h1v1h-1zM15 4h1v1h-1zM18 4h1v1h-1zM20 4h3v1h-3zM24 4h1v1h-1zM0 5h1v1h-1zM6 5h1v1h-1zM8 5h2v1h-2zM12 5h5v1h-5zM18 5h1v1h-1zM24 5h1v1h-1zM0 6h7v1h-7zM12 6h3v1h-3zM18 6h7v1h-7zM10 7h1v1h-1zM14 7h3v1h-3zM0 8h1v1h-1zM5 8h2v1h-2zM8 8h1v1h-1zM11 8h2v1h-2zM15 8h3v1h-3zM20 8h1v1h-1zM24 8h1v1h-1zM1 9h2v1h-2zM7 9h1v1h-1zM10 9h4v1h-4zM15 9h3v1h-3zM19 9h2v1h-2zM23 9h1v1h-1zM3 10h4v1h-4zM8 10h2v1h-2zM12 10h1v1h-1zM16 10h1v1h-1zM18 10h2v1h-2zM0 11h1v1h-1zM5 11h1v1h-1zM7 11h1v1h-1zM12 11h1v1h-1zM16 11h6v1h-6zM0 12h1v1h-1zM3 12h1v1h-1zM6 12h1v1h-1zM8 12h2v1h-2zM12 12h2v1h-2zM15 12h3v1h-3zM19 12h1v1h-1zM21 12h3v1h-3zM1 13h1v1h-1zM5 13h3v1h-3zM9 13h3v1h-3zM14 13h2v1h-2zM19 13h2v1h-2zM22 13h2v1h-2zM2 14h1v1h-1zM4 14h1v1h-1zM6 14h2v1h-2zM10 14h2v1h-2zM13 14h7v1h-7zM21 14h1v1h-1zM23 14h2v1h-2zM0 15h3v1h-3zM5 15h2v1h-2zM8 15h1v1h-1zM10 15h2v1h-2zM13 15h1v1h-1zM17 15h1v1h-1zM21 15h4v1h-4zM0 16h1v1h-1zM2 16h3v1h-3zM8 16h7v1h-7zM16 16h9v1h-9zM8 17h3v1h-3zM16 17h1v1h-1zM20 17h1v1h-1zM23 17h1v1h-1zM0 18h7v1h-7zM14 18h3v1h-3zM18 18h1v1h-1zM20 18h1v1h-1zM24 18h1v1h-1zM0 19h1v1h-1zM6 19h1v1h-1zM8 19h3v1h-3zM12 19h1v1h-1zM15 19h2v1h-2zM20 19h1v1h-1zM22 19h3v1h-3zM0 20h1v1h-1zM2 20h3v1h-3zM6 20h1v1h-1zM9 20h1v1h-1zM11 20h3v1h-3zM15 20h6v1h-6zM22 20h3v1h-3zM0 21h1v1h-1zM2 21h3v1h-3zM6 21h1v1h-1zM11 21h1v1h-1zM13 21h9v1h-9zM23 21h1v1h-1zM0 22h1v1h-1zM2 22h3v1h-3zM6 22h1v1h-1zM10 22h5v1h-5zM16 22h1v1h-1zM18 22h2v1h-2zM21 22h2v1h-2zM0 23h1v1h-1zM6 23h1v1h-1zM8 23h1v1h-1zM11 23h2v1h-2zM14 23h4v1h-4zM20 23h1v1h-1zM22 23h1v1h-1zM24 23h1v1h-1zM0 24h7v1h-7zM8 24h8v1h-8zM19 24h2v1h-2zM22 24h3v1h-3z" fill="#0a0a0a"/></svg>
<div class="abs" style="top:598.83px;font-size:6.45px;line-height:7.74px;color:#666;white-space:nowrap;left:247.50px;">Created by</div>
<svg class="abs" style="left:282.2px;top:599.4px" width="8.400" height="7.600" viewBox="0 0 26 25"><path d="M3.200 0.700H18.600L24.200 6v18.300l-5.300-4.600-5.600 4.600-5.400-4.600L0.600 24.300V3.300A2.600 2.600 0 0 1 3.200 0.700z" fill="#0a6cf0"/></svg>
<div class="abs" style="top:598.36px;font-size:5.9px;line-height:7.08px;color:#111;white-space:nowrap;font-weight:700;-webkit-text-stroke:.12px #111;left:292.00px;letter-spacing:-.12px;"><span style="color:#1a73e8">moon</span><span style="color:#1d2a55">invoice</span></div>
<div class="abs" style="left:308.50px;top:605.60px;width:16.50px;height:0.70px;background:#c3c9dd;"></div>
<svg class="abs" style="left:0;top:0" width="572" height="643" viewBox="0 0 572 643" fill="none" stroke="#222"><rect x="92.50" y="35.50" width="389.90" height="555.80" fill="none" stroke-width="1.3"/><path d="M311.90 57.00H482.40" stroke-width="1.5"/><path d="M311.90 71.70H482.40" stroke-width="1.5"/><path d="M311.90 86.30H482.40" stroke-width="1.5"/><path d="M311.90 101.00H482.40" stroke-width="1.5"/><path d="M311.90 115.60H482.40" stroke-width="1.5"/><path d="M311.90 130.20H482.40" stroke-width="1.5"/><path d="M312.60 57.00V130.20" stroke-width="1.5"/><path d="M378.30 57.00V130.20" stroke-width="1.5"/><path d="M92.50 316.30H482.40" stroke-width="1.5"/><path d="M92.50 331.20H482.40" stroke-width="1.5"/><path d="M127.00 316.30V331.20" stroke-width="1.5"/><path d="M286.50 316.30V331.20" stroke-width="1.5"/><path d="M325.80 316.30V331.20" stroke-width="1.5"/><path d="M365.00 316.30V331.20" stroke-width="1.5"/><path d="M403.80 316.30V331.20" stroke-width="1.5"/><path d="M443.00 316.30V331.20" stroke-width="1.5"/><path d="M92.50 366.20H482.40" stroke-width="1.3"/><path d="M92.50 401.80H482.40" stroke-width="1.5"/><path d="M92.50 416.50H482.40" stroke-width="1.5"/><path d="M127.00 401.80V416.50" stroke-width="1.5"/><path d="M286.50 401.80V416.50" stroke-width="1.5"/><path d="M325.80 401.80V416.50" stroke-width="1.5"/><path d="M365.00 401.80V416.50" stroke-width="1.5"/><path d="M403.80 401.80V416.50" stroke-width="1.5"/><path d="M443.00 401.80V416.50" stroke-width="1.5"/><path d="M92.50 444.20H482.40" stroke-width="1.4"/><path d="M286.50 444.20V510.70" stroke-width="1.5"/><path d="M286.50 483.60H482.40" stroke-width="1.5"/><path d="M92.50 510.70H482.40" stroke-width="1.5"/><path d="M92.50 561.10H482.40" stroke-width="1.3"/></svg>
  </div>
  <!-- right panel -->
  <div class="abs" id="panel" style="left:572px;top:95px;width:382px;height:643px;overflow:hidden">
<style>
#panel .bx{position:absolute;left:0;top:-1px;width:378px;height:644px;border-left:2px solid #e7e7e7;border-right:1px solid #d9d9d9}
#panel .rl{position:absolute;left:1px;width:376px;height:1px;background:#d6d6d6}
#panel .lb{position:absolute;left:15.800px;font-size:13.200px;color:#222;white-space:nowrap}
.tg{position:absolute;left:327px;width:36px;height:14px;border-radius:7px}
.tg i{position:absolute;top:-3px;width:20px;height:20px;border-radius:50%;box-shadow:0 2px 1px -1px rgba(0,0,0,.2),0 1px 1px 0 rgba(0,0,0,.14),0 1px 3px 0 rgba(0,0,0,.12)}
.tg.on{background:#8cc0ff}.tg.on i{left:15.500px;background:#0078ff}
.tg.off{background:#d3d3d3}.tg.off i{left:0;background:#fafafa}
.acc{position:absolute;left:1px;width:376px;background:#f8f8f8}
</style>
<div class="bx"></div>
<div class="acc" style="top:459.3px;height:46.0px"></div>
<div class="acc" style="top:505.3px;height:45.4px"></div>
<div class="acc" style="top:550.7px;height:45.7px"></div>
<div class="acc" style="top:596.4px;height:45.9px"></div>
<div class="rl" style="top:2.5px"></div>
<div class="rl" style="top:47.9px"></div>
<div class="rl" style="top:93.7px"></div>
<div class="rl" style="top:139.5px"></div>
<div class="rl" style="top:185.1px"></div>
<div class="rl" style="top:230.6px"></div>
<div class="rl" style="top:276.2px"></div>
<div class="rl" style="top:322.0px"></div>
<div class="rl" style="top:367.8px"></div>
<div class="rl" style="top:413.3px"></div>
<div class="rl" style="top:458.8px"></div>
<div class="rl" style="top:504.8px"></div>
<div class="rl" style="top:550.2px"></div>
<div class="rl" style="top:595.9px"></div>
<div class="rl" style="top:641.8px"></div>
<div class="lb" style="top:18.0px">Total</div>
<div class="tg on" style="top:19.0px"><i></i></div>
<div class="lb" style="top:63.6px">Amount Due</div>
<div class="tg on" style="top:64.6px"><i></i></div>
<div class="lb" style="top:109.4px">Amount Paid</div>
<div class="tg on" style="top:110.4px"><i></i></div>
<div class="lb" style="top:155.1px">Amount Used</div>
<div class="tg on" style="top:156.1px"><i></i></div>
<div class="lb" style="top:200.7px">Tax</div>
<div class="abs" style="left:207px;top:191.4px;width:155px;height:34.500px;border:1px solid #dcdcdc;border-radius:4px"></div>
<div class="abs" style="left:221.800px;top:200.2px;font-size:13.600px;color:#222">Individual</div>
<div class="abs" style="left:333.500px;top:207.2px;border-top:4.500px solid #555;border-left:4.500px solid transparent;border-right:4.500px solid transparent"></div>
<div class="lb" style="top:246.2px">Tax % Value</div>
<div class="tg off" style="top:247.2px"><i></i></div>
<div class="lb" style="top:291.9px">Taxable Amount</div>
<div class="tg on" style="top:292.9px"><i></i></div>
<div class="lb" style="top:337.7px">Total in Words</div>
<div class="tg off" style="top:338.7px"><i></i></div>
<div class="lb" style="top:383.3px">HSN/SAC Summary</div>
<div class="tg on" style="top:384.3px"><i></i></div>
<div class="lb" style="top:428.8px">Return Order</div>
<div class="tg off" style="top:429.8px"><i></i></div>
<div class="lb" style="top:474.0px">Notes &amp; Terms</div>
<svg class="abs" style="left:351.500px;top:479.5px" width="13" height="9" viewBox="0 0 13 9" fill="none" stroke="#444" stroke-width="1.600" stroke-linecap="round" stroke-linejoin="round"><path d="M2 2l4.500 4.500L11 2"/></svg>
<div class="lb" style="top:519.7px">Signature</div>
<svg class="abs" style="left:351.500px;top:525.2px" width="13" height="9" viewBox="0 0 13 9" fill="none" stroke="#444" stroke-width="1.600" stroke-linecap="round" stroke-linejoin="round"><path d="M2 2l4.500 4.500L11 2"/></svg>
<div class="lb" style="top:565.2px">Footer</div>
<svg class="abs" style="left:351.500px;top:570.7px" width="13" height="9" viewBox="0 0 13 9" fill="none" stroke="#444" stroke-width="1.600" stroke-linecap="round" stroke-linejoin="round"><path d="M2 2l4.500 4.500L11 2"/></svg>
<div class="lb" style="top:611.0px">Payment</div>
<svg class="abs" style="left:351.500px;top:616.5px" width="13" height="9" viewBox="0 0 13 9" fill="none" stroke="#444" stroke-width="1.600" stroke-linecap="round" stroke-linejoin="round"><path d="M2 2l4.500 4.500L11 2"/></svg>
<div class="abs" style="left:-0.5px;top:410.9px;width:110.800px;height:53px;border:3px solid #ea1c24"></div>
<div class="abs" style="left:312.8px;top:412.0px;width:61.200px;height:52px;border:3px solid #ea1c24"></div>
<div class="abs" style="left:378px;top:0;width:4px;height:643px;background:#f3f3f3"></div>
<div class="abs" style="left:378px;top:307px;width:4px;height:335.5px;background:#b9b9b9;border-radius:2px 2px 0 0"></div>
  </div>
  <div class="hl" style="top:738px"></div>
  <!-- footer -->
  <svg class="abs" style="left:36px;top:755px" width="20" height="20" viewBox="0 0 20 20" fill="none" stroke="#7a7a7a" stroke-width="2"><path d="M15.600 6.200A6.600 6.600 0 1 0 16.800 10"/><path d="M17.300 2.200v5.300H12z" fill="#7a7a7a" stroke="none"/></svg>
  <svg class="abs" style="left:96px;top:757px" width="24" height="15" viewBox="0 0 24 15"><path d="M12 0.500C6.800 0.500 2.700 3.500 1 7.500c1.700 4 5.800 7 11 7s9.300-3 11-7c-1.700-4-5.800-7-11-7z" fill="#7a7a7a"/><circle cx="12" cy="7.500" r="4.300" fill="#fff"/><circle cx="12" cy="7.500" r="2.500" fill="#7a7a7a"/></svg>
  <svg class="abs" style="left:157px;top:751px" width="26" height="26" viewBox="0 0 26 26"><g transform="rotate(45 13 13)" fill="#7a7a7a"><rect x="11.300" y="-1.500" width="3.400" height="10" rx="1.700"/><rect x="6.500" y="8" width="13" height="4"/><path d="M6.500 13h13v8.500c-1.500 1-3 .2-4.300 1-1.400.8-2.800.6-4.400 0-1.400-.5-2.800.3-4.300-.5z"/></g></svg>
  <svg class="abs" style="left:227px;top:755px" width="18" height="19" viewBox="0 0 18 19"><path d="M1.800 4.500v11.200a1.500 1.500 0 0 0 1.500 1.500h9" fill="none" stroke="#7a7a7a" stroke-width="1.600"/><path d="M5.300 1.200h6.500L16 5.400v8.800a1.300 1.300 0 0 1-1.300 1.300H5.300A1.300 1.300 0 0 1 4 14.200V2.500a1.300 1.300 0 0 1 1.300-1.300z" fill="#7a7a7a"/><path d="M6.300 7.300h7.400v1.500H6.300zM6.300 10.300h7.400v1.500H6.300z" fill="#fff"/><path d="M11.500 1.500v4h4.200z" fill="#fff" opacity=".55"/></svg>
  <div class="fb" style="left:45.600px">Reset</div>
  <div class="fb" style="left:107.900px">Preview</div>
  <div class="fb" style="left:170.200px">Default</div>
  <div class="fb" style="left:235.500px">Standard</div>
</div>

</body>
</html>
